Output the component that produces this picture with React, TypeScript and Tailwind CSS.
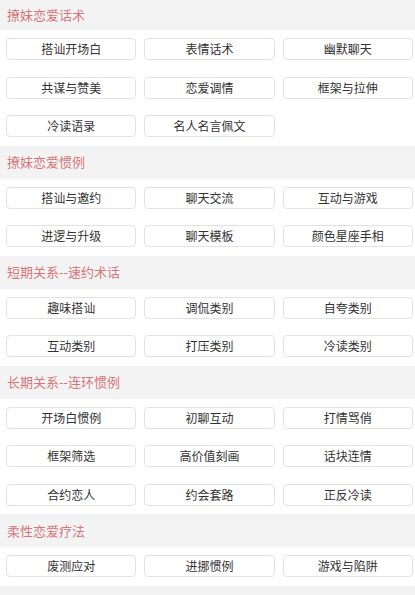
const sections = [
  {
    title: "撩妹恋爱话术",
    items: ["搭讪开场白", "表情话术", "幽默聊天", "共谋与赞美", "恋爱调情", "框架与拉伸", "冷读语录", "名人名言佩文"],
  },
  {
    title: "撩妹恋爱惯例",
    items: ["搭讪与邀约", "聊天交流", "互动与游戏", "进逻与升级", "聊天模板", "颜色星座手相"],
  },
  {
    title: "短期关系--速约术话",
    items: ["趣味搭讪", "调侃类别", "自夸类别", "互动类别", "打压类别", "冷读类别"],
  },
  {
    title: "长期关系--连环惯例",
    items: ["开场白惯例", "初聊互动", "打情骂俏", "框架筛选", "高价值刻画", "话块连情", "合约恋人", "约会套路", "正反冷读"],
  },
  {
    title: "柔性恋爱疗法",
    items: ["废测应对", "进挪惯例", "游戏与陷阱"],
  },
]

function SectionHeader({ title, first }: { title: string; first?: boolean }) {
  return (
    <div
      className={`flex items-center bg-[#f3f3f3] pl-[7px] text-[13px] text-[#d7777a] ${
        first ? "h-[30px]" : "h-[33px]"
      }`}
    >
      {title}
    </div>
  )
}

export default function App() {
  return (
    <div
      className="w-[415px] bg-white"
      style={{ fontFamily: '"Noto Sans CJK SC", "Noto Sans", sans-serif' }}
    >
      {sections.map((section, i) => (
        <section key={section.title}>
          <SectionHeader title={section.title} first={i === 0} />
          <div className="grid grid-cols-3 auto-rows-[38.5px] gap-x-2 pl-[6px] pr-[2px]">
            {section.items.map((item) => (
              <div
                key={item}
                className="flex h-[22px] items-center justify-center self-center rounded-[4px] border border-[#e2e2e2] bg-white text-[12px] text-[#333]"
              >
                {item}
              </div>
            ))}
          </div>
        </section>
      ))}
      {/* next group's band, continues below the fold */}
      <div className="h-[33px] bg-[#f3f3f3]" />
    </div>
  )
}
